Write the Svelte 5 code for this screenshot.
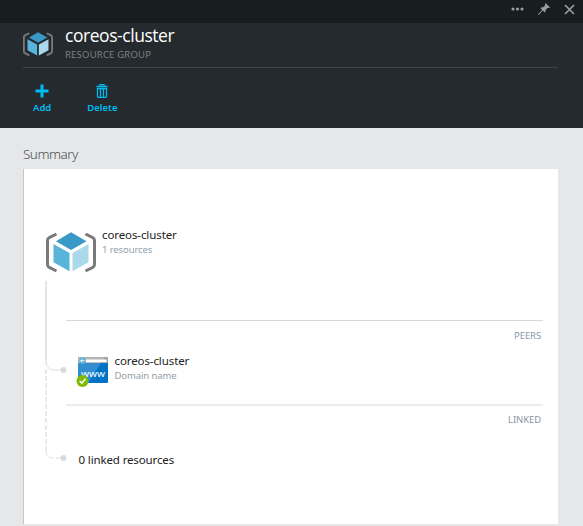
<script>
  const commands = [
    { label: 'Add', icon: 'add' },
    { label: 'Delete', icon: 'trash' }
  ];
</script>

{#snippet cube(size)}
  <svg class="cube" width={size} height={size * 0.82} viewBox="0 0 50 41" fill="none">
    <path class="bracket" d="M10.500 2 L3.200 5.700 Q1.500 6.500 1.500 8.500 V32.500 Q1.500 34.500 3.200 35.300 L10.500 39 M39.500 2 L46.800 5.700 Q48.500 6.500 48.500 8.500 V32.500 Q48.500 34.500 46.800 35.300 L39.500 39" stroke-width="3" />
    <path d="M25 .3 L40.500 9.200 L25 18 L10 9.200 Z" fill="#3999c6" />
    <path d="M7.500 12 L23.500 21 V39.300 L7.500 30.300 Z" fill="#59b4d9" />
    <path d="M42.500 12 L26.500 21 V39.300 L42.500 30.300 Z" fill="#abd9ec" />
  </svg>
{/snippet}

<div class="blade">
  <div class="topbar">
    <svg width="13" height="18" viewBox="0 0 13 18" fill="#9a9d9e"><circle cx="2" cy="9" r="1.6" /><circle cx="6.500" cy="9" r="1.6" /><circle cx="11" cy="9" r="1.6" /></svg>
    <svg class="pin" width="12" height="12" viewBox="0 0 12 12" fill="#9a9d9e"><path d="M7.500 0 L12 4.500 L10.800 5 L9.500 4.900 L7.700 6.700 Q8 8.400 7 9.400 L4.900 7.600 L.8 11.800 L0 11.900 L.2 11 L4.200 6.900 L2.300 4.900 Q3.500 4 5.200 4.300 L7.100 2.500 L7 1.200 Z" /></svg>
    <svg class="close" width="11" height="11" viewBox="0 0 11 11"><path d="M1 1 L10 10 M10 1 L1 10" stroke="#9a9d9e" stroke-width="1.700" /></svg>
  </div>
  <header>
    <div class="heading">
      {@render cube(30)}
      <div>
        <h1>coreos-cluster</h1>
        <p>RESOURCE GROUP</p>
      </div>
    </div>
    <nav>
      {#each commands as command}
        <button>
          {#if command.icon === 'add'}
            <svg width="14" height="14" viewBox="0 0 14 14"><path d="M5.500 .5h3v5h5v3h-5v5h-3v-5h-5v-3h5z" fill="#00bcf2" /></svg>
          {:else}
            <svg width="12" height="14" viewBox="0 0 12 14" fill="none" stroke="#00bcf2"><path d="M4 1.500V.5h4v1M.5 2.500h11" stroke-width="1.300" /><path d="M1.500 4.500h9v8q0 .8-.8.8H2.300q-.8 0-.8-.8zM4.500 5v8M7.500 5v8" stroke-width="1.300" /></svg>
          {/if}
          <span>{command.label}</span>
        </button>
      {/each}
    </nav>
  </header>
  <main>
    <h2>Summary</h2>
    <section>
      <svg class="connectors" width="24" height="185" viewBox="0 0 24 185" fill="none">
        <path d="M2 0V83" stroke="#e8eaea" stroke-width="2" />
        <path d="M2 0V78" stroke="#e0e2e3" stroke-width="2" stroke-dasharray="4 2" />
        <path d="M2 82Q2 86 5 87L6 88Q7 89 9 89H17" stroke="#dcdfe1" />
        <path d="M2 88V171" stroke="#e9eaeb" stroke-width="2" stroke-dasharray="5 2" />
        <path d="M2 170Q2 177 9 177H17" stroke="#dcdfe1" stroke-dasharray="5 2" />
        <circle cx="19.500" cy="89" r="2.900" fill="#d9dcde" />
        <circle cx="19.500" cy="177" r="2.900" fill="#d9dcde" />
      </svg>
      <div class="group">
        {@render cube(50)}
        <div class="text"><strong>coreos-cluster</strong><small>1 resources</small></div>
      </div>
      <div class="divider peers">PEERS</div>
      <div class="resource">
        <svg width="32" height="31" viewBox="0 0 32 31">
          <path d="M2 7H32V26Q32 27 31 27H3Q2 27 2 26Z" fill="#0072c6" />
          <path d="M2 7H25L12 27H2Z" fill="#338ed1" />
          <path d="M2 7V2Q2 1 3 1H31Q32 1 32 2V7Z" fill="#a0a1a2" />
          <path d="M2 7V2Q2 1 3 1H29L25 7Z" fill="#b3b4b5" />
          <rect x="10" y="3.500" width="20.500" height="2.700" fill="#fff" />
          <circle cx="6.500" cy="4.700" r="3.100" fill="#59b4d9" />
          <path d="M8.500 4.700H4.700M6.200 3.200L4.700 4.700L6.200 6.200" fill="none" stroke="#fff" stroke-width=".9" />
          <text x="5" y="20.500" textLength="24" lengthAdjust="spacingAndGlyphs">www</text>
          <circle cx="6.500" cy="25" r="6" fill="#7fba00" />
          <path d="M3.700 25L5.800 27.200L9.500 22.700" fill="none" stroke="#fff" stroke-width="1.500" />
        </svg>
        <div class="text"><strong>coreos-cluster</strong><small>Domain name</small></div>
      </div>
      <div class="divider linked">LINKED</div>
      <div class="count">0 linked resources</div>
    </section>
  </main>
</div>

<style>
  :global(body) { margin: 0; }
  .blade { width: 583px; height: 526px; display: flex; flex-direction: column; background: #e6e7e8; font-family: "Noto Sans", sans-serif; overflow: hidden; }
  svg { display: block; flex: none; }
  h1, h2, p { margin: 0; font-weight: 400; }
  .topbar { height: 23px; flex: none; box-sizing: border-box; padding-right: 8px; background: #181d20; display: flex; justify-content: flex-end; }
  .pin { margin: 3px 0 0 14px; }
  .close { margin: 4px 0 0 14px; }
  header { height: 105px; flex: none; box-sizing: border-box; padding: 0 25px 0 23px; background: #242a2d; }
  .heading { height: 44px; border-bottom: 1px solid #3f4447; display: flex; gap: 12px; }
  .heading .cube { margin-top: 9px; }
  .bracket { stroke: #7a7a7a; }
  h1 { color: #fff; font-family: "Open Sans", sans-serif; font-size: 17.500px; line-height: 24px; letter-spacing: -.45px; }
  p { margin-top: 1px; color: #7d8182; font-size: 9.500px; line-height: 14px; letter-spacing: .2px; }
  nav { display: flex; padding-left: 10px; gap: 36px; }
  button { padding: 16px 0 0; border: 0; background: none; display: flex; flex-direction: column; align-items: center; font: 600 9.500px/14px "Noto Sans", sans-serif; color: #00bcf2; }
  button span { margin-top: 3px; }
  main { padding: 16px 25px 0 23px; }
  h2 { color: #4c5154; font-size: 13.500px; line-height: 20px; font-weight: 300; letter-spacing: -.5px; }
  section { position: relative; box-sizing: border-box; height: 355px; margin-top: 5px; padding-top: 58px; border-left: 1px solid #c4c6c8; background: #fff; }
  .connectors { position: absolute; left: 20px; top: 112px; }
  .group { display: flex; gap: 6px; height: 93px; padding-left: 22px; }
  .group .cube { margin-top: 5px; }
  .text { display: flex; flex-direction: column; }
  strong { font-weight: 400; font-size: 11.500px; line-height: 16px; letter-spacing: -.1px; color: #222; }
  small { font-size: 9.500px; line-height: 14px; letter-spacing: -.1px; color: #95a0a8; }
  .divider { box-sizing: border-box; margin: 0 15px 0 42px; padding: 8px 2px 0 0; border-top: 1px solid #d6d8da; height: 33px; text-align: right; font-size: 9.500px; line-height: 14px; letter-spacing: -.1px; color: #8a98a5; }
  .linked { border-top: 2px solid #ebecec; height: 48px; padding-top: 7px; }
  .resource { display: flex; gap: 6.500px; height: 51px; padding-left: 52px; }
  .resource svg { margin-top: 3px; }
  text { font: 400 9.500px "Noto Sans", sans-serif; fill: #fff; }
  .count { padding-left: 54.500px; font-size: 11.500px; line-height: 16px; letter-spacing: -.13px; color: #222; }
</style>
